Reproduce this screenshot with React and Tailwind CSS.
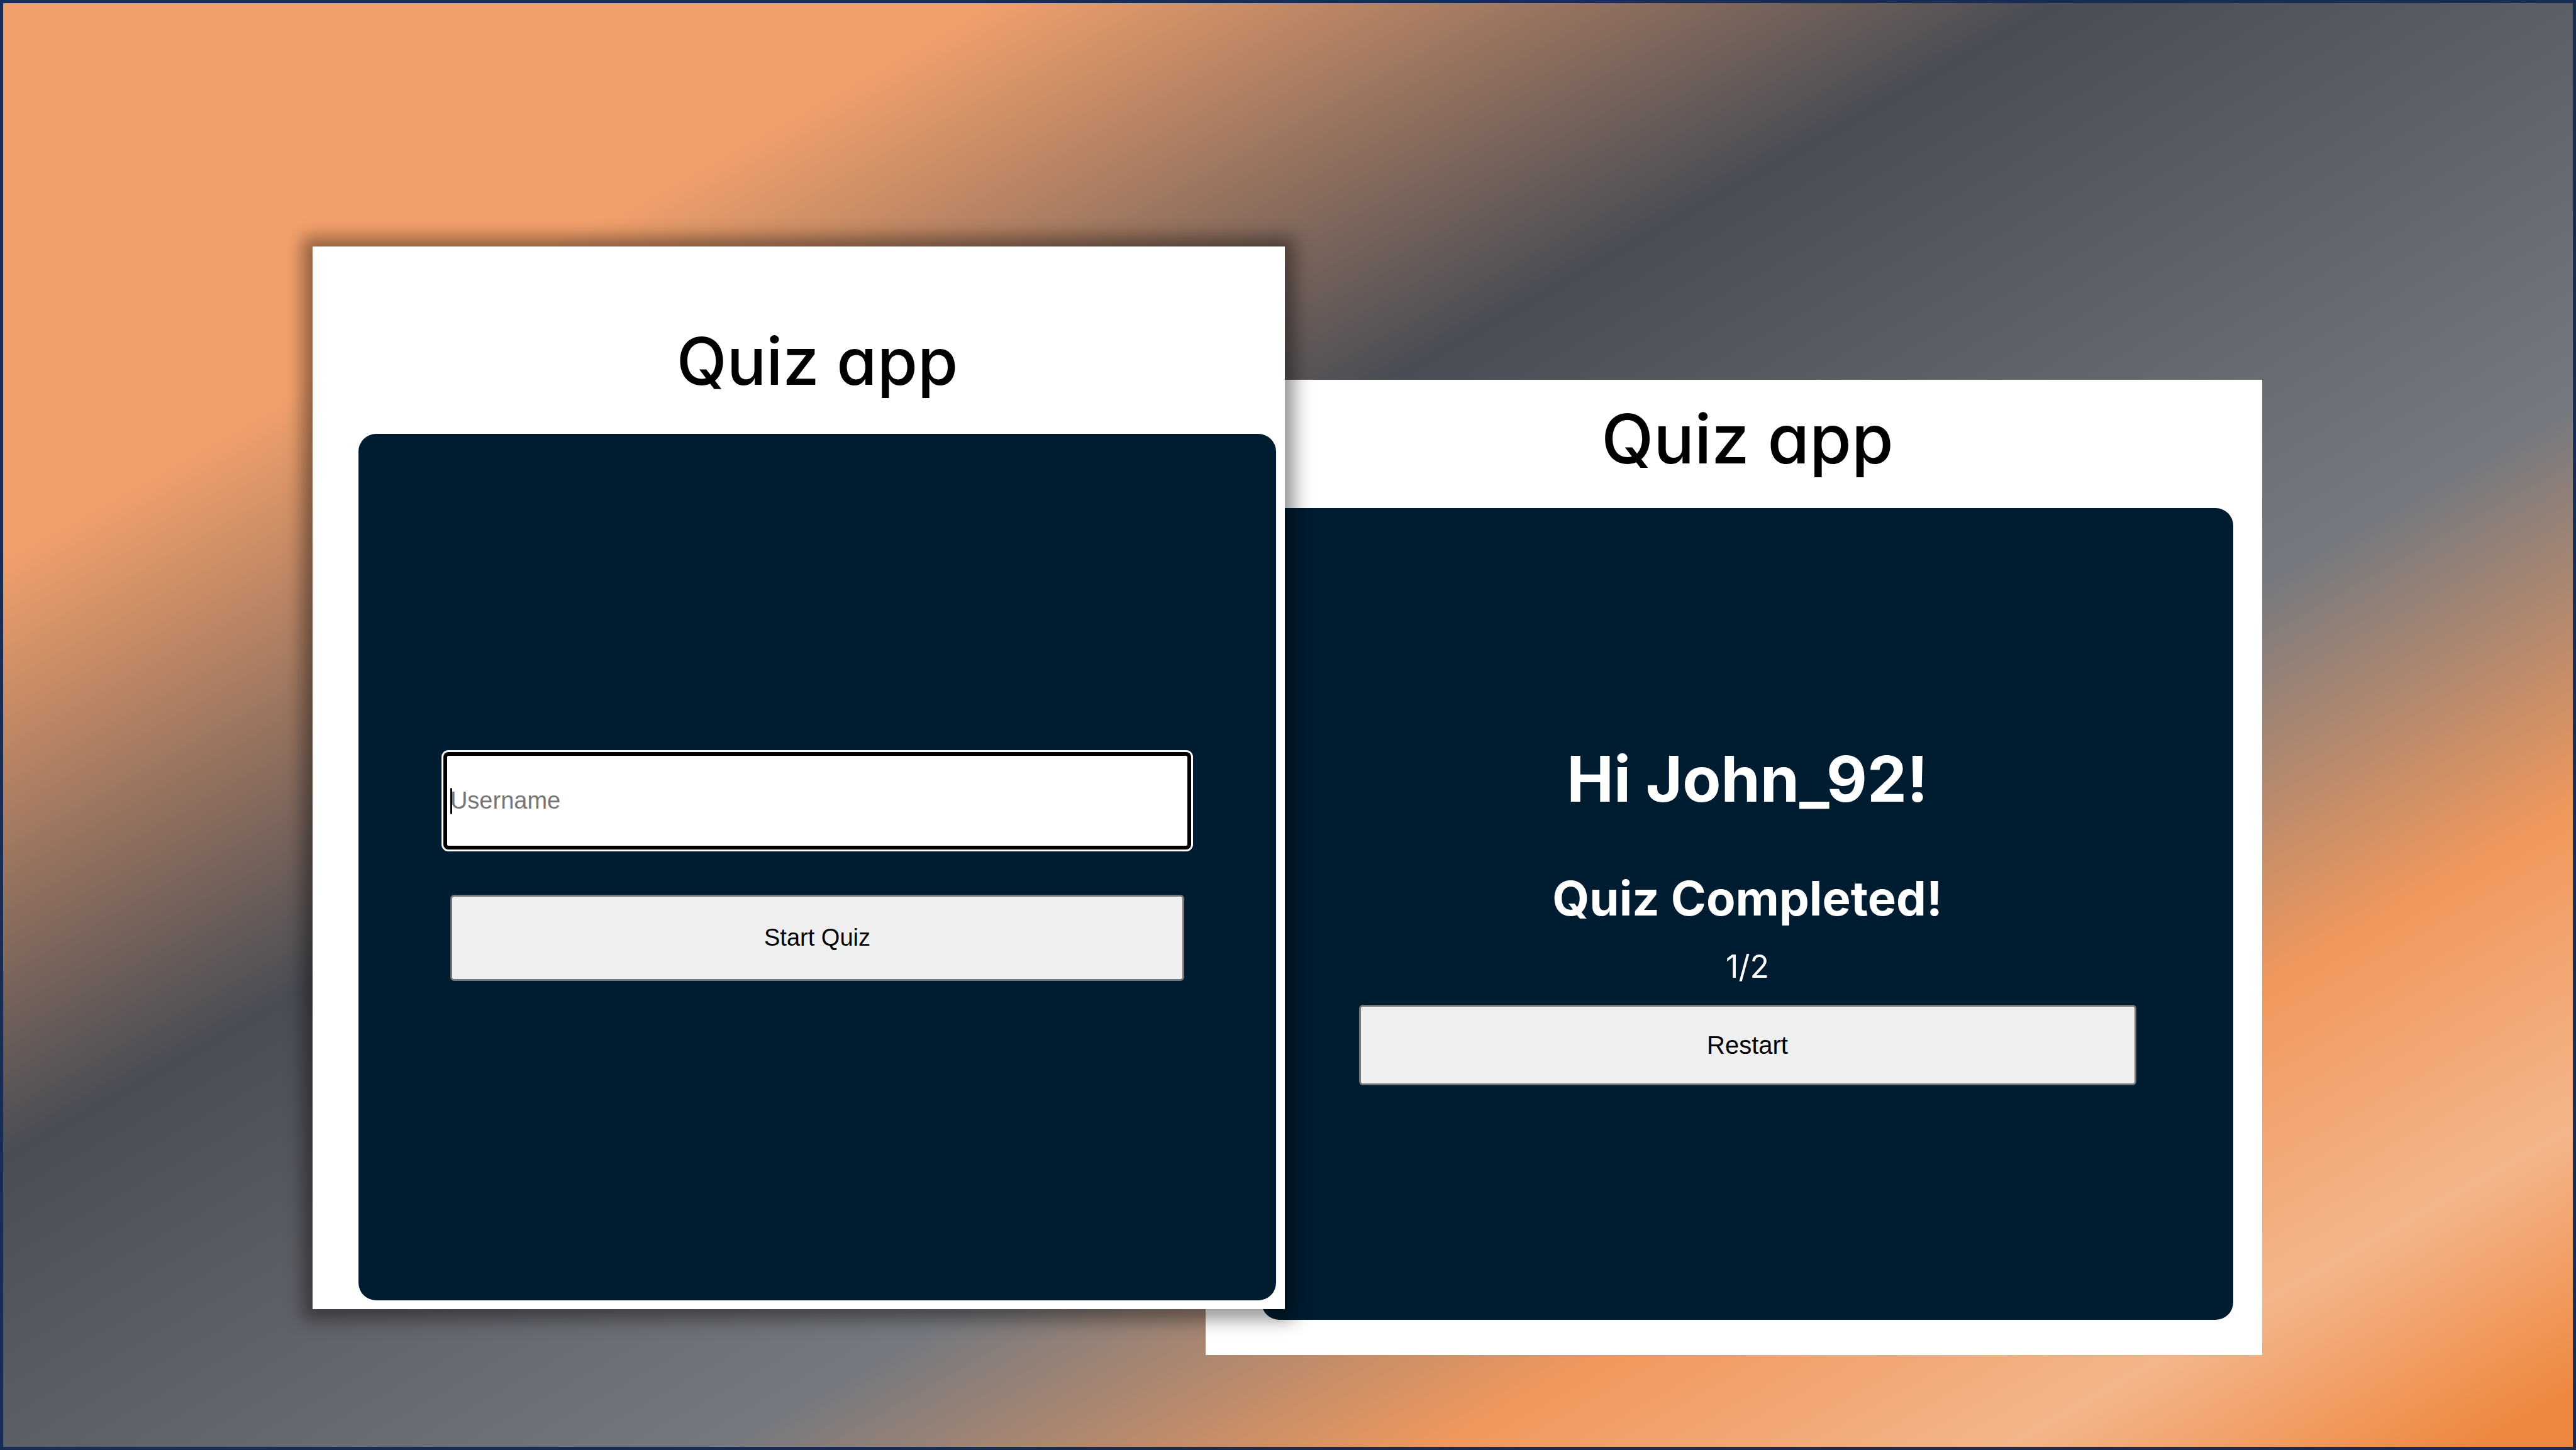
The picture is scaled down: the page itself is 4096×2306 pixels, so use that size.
const panel =
  "flex flex-1 flex-col items-center justify-center rounded-[28px] bg-[#001c30]";
const button =
  "w-4/5 rounded-md border-[3px] border-[#767676] bg-[#efefef] text-black hover:bg-[#e3e3e3]";
const display = "font-['Inter',sans-serif] [font-feature-settings:'cv11']";

function StartCard() {
  return (
    <section className="z-10 col-[2/4] row-[2/4] flex flex-col bg-white pr-3.5 pb-3.5 pl-[73px] shadow-[0_1px_26px_16px_rgba(0,0,0,0.4)]">
      <h1 className={`${display} pt-[130px] pb-[64px] text-center text-[104px] leading-[104px] font-medium text-black`}>
        Quiz app
      </h1>
      <form className={`${panel} gap-[72px] pb-[2px]`} onSubmit={(e) => e.preventDefault()}>
        <div className="relative w-[calc(80%+22px)]">
          <input
            type="text"
            aria-label="Username"
            placeholder="Username"
            className="block h-[155px] w-full rounded-lg border-[6px] border-black bg-white pl-[5px] text-[38px] text-black caret-transparent ring-[3px] ring-white outline-none placeholder:text-[#757575]"
          />
          <span className="absolute top-1/2 left-[11px] h-[41px] w-[3px] -translate-y-1/2 bg-black" />
        </div>
        <button type="submit" className={`${button} h-[137px] text-[38px]`}>
          Start Quiz
        </button>
      </form>
    </section>
  );
}

function ResultCard() {
  return (
    <section className="col-[3/5] row-[3/5] flex flex-col bg-white pr-[46px] pb-14 pl-[89px]">
      <h1 className={`${display} pt-[40px] pb-[56px] text-center text-[108px] leading-[108px] font-medium text-black`}>
        Quiz app
      </h1>
      <div className={`${panel} pb-[2px] text-white`}>
        <h2 className={`${display} text-[100px] leading-[118px] font-bold`}>Hi John_92!</h2>
        <h3 className={`${display} mt-[86px] text-[76px] leading-[88px] font-bold`}>Quiz Completed!</h3>
        <p className={`${display} mt-[37px] text-[50px] leading-[56px]`}>1/2</p>
        <button type="button" className={`${button} mt-[33px] h-32 text-[40px]`}>
          Restart
        </button>
      </div>
    </section>
  );
}

export default function App() {
  return (
    <main className="grid min-h-screen w-full grid-cols-[492fr_1420fr_126fr_1554fr_494fr] grid-rows-[387fr_212fr_1478fr_73fr_146fr] border-[5px] border-[#192c54] bg-[linear-gradient(to_bottom_right,#f2a06b_0%,#f2a06b_19%,#4a4d55_40%,#5f6168_51%,#76797f_64%,#f0985c_78%,#f4b58a_89%,#ee8840_98%,#ee8840_100%)] font-['Liberation_Sans',Arial,sans-serif]">
      <StartCard />
      <ResultCard />
    </main>
  );
}
